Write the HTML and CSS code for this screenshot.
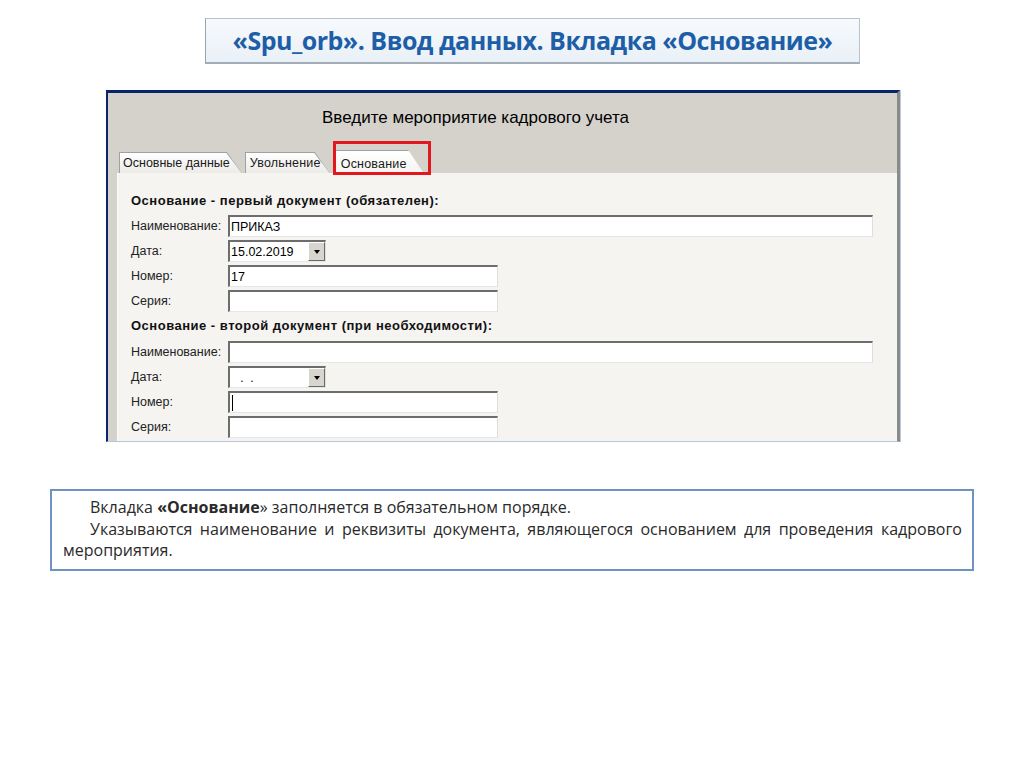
FILE: index.html
```html
<!DOCTYPE html>
<html lang="ru">
<head>
<meta charset="utf-8">
<title>Spu_orb</title>
<link rel="stylesheet" href="styles.css">
</head>
<body>
<div class="slide">
  <div class="title-box"><h1>«Spu_orb». Ввод данных. Вкладка «Основание»</h1></div>

  <div class="window">
    <div class="win-title">Введите мероприятие кадрового учета</div>
    <div class="tabs">
      <div class="tab first"><span>Основные данные</span></div>
      <div class="tab second"><span>Увольнение</span></div>
      <div class="tab active"><span>Основание</span><div class="highlight"></div></div>
    </div>
    <div class="panel">
      <div class="section">Основание - первый документ (обязателен):</div>
      <div class="row"><div class="label">Наименование:</div><div class="field wide">ПРИКАЗ</div></div>
      <div class="row"><div class="label">Дата:</div><div class="field date"><span class="val">15.02.2019</span><span class="btn"><i></i></span></div></div>
      <div class="row"><div class="label">Номер:</div><div class="field mid">17</div></div>
      <div class="row"><div class="label">Серия:</div><div class="field mid"></div></div>

      <div class="section later">Основание - второй документ (при необходимости):</div>
      <div class="row"><div class="label">Наименование:</div><div class="field wide"></div></div>
      <div class="row"><div class="label">Дата:</div><div class="field date"><span class="val dots">&nbsp;.&nbsp;&nbsp;.</span><span class="btn"><i></i></span></div></div>
      <div class="row"><div class="label">Номер:</div><div class="field mid"><span class="caret"></span></div></div>
      <div class="row"><div class="label">Серия:</div><div class="field mid"></div></div>
    </div>
  </div>

  <div class="note">
    <p>Вкладка <b>«Основание</b>» заполняется в обязательном порядке.</p>
    <p>Указываются наименование и реквизиты документа, являющегося основанием для проведения кадрового мероприятия.</p>
  </div>
</div>
</body>
</html>
```

FILE: styles.css
```css
html, body {
  margin: 0;
  padding: 0;
  background: #ffffff;
}

.slide {
  width: 1024px;
  height: 767px;
  display: flex;
  flex-direction: column;
  align-items: flex-start;
  background: #ffffff;
  overflow: hidden;
}

/* Title */
.title-box {
  margin: 18px 0 0 205px;
  width: 655px;
  height: 46px;
  box-sizing: border-box;
  background: linear-gradient(#f7fafd, #e9f0f7);
  border: 1px solid #b9c3cc;
  border-left-color: #9aa4ae;
  border-bottom: 2px solid #a3adb7;
  display: flex;
  align-items: center;
  justify-content: center;
}

.title-box h1 {
  margin: 0;
  font-family: "Open Sans", "Noto Sans", sans-serif;
  font-weight: 700;
  font-size: 25px;
  letter-spacing: -0.5px;
  color: #1d5ea6;
  line-height: 1;
}

/* Window */
.window {
  margin: 26px 0 0 106px;
  width: 794px;
  height: 352px;
  box-sizing: border-box;
  background: #d5d2cc;
  border-top: 3px solid #0a246a;
  border-left: 2px solid #0a246a;
  border-right: 3px solid #8a8a8a;
  border-bottom: 1px solid #b6c6da;
  box-shadow: 1px 0 0 #b8cbe2;
  display: flex;
  flex-direction: column;
  font-family: "Liberation Sans", Arial, sans-serif;
  color: #000;
}

.win-title {
  height: 56px;
  box-sizing: border-box;
  padding: 16px 0 0 214px;
  font-size: 17px;
  line-height: 18px;
}

.tabs {
  height: 24px;
  display: flex;
  align-items: flex-end;
  gap: 3px;
  padding-left: 11px;
}

.tab {
  position: relative;
  height: 21px;
  box-sizing: border-box;
  padding: 1px 0 0 1px;
  background: #9aa3a6;
  clip-path: polygon(0 0, calc(100% - 15px) 0, 100% 100%, 0 100%);
}

.tab span {
  display: block;
  height: 20px;
  box-sizing: border-box;
  padding: 3px 12px 0 3px;
  background: linear-gradient(#ffffff, #ecebe6);
  clip-path: polygon(0 0, calc(100% - 15.5px) 0, 100% 100%, 0 100%);
  font-size: 12.5px;
  line-height: 15px;
  color: #1a1a1a;
  white-space: nowrap;
}

.tab.second span {
  padding: 3px 9px 0 4px;
  letter-spacing: 0.2px;
}

.tab.active {
  height: 23px;
  margin-left: 2px;
  clip-path: none;
  background: transparent;
  padding: 0;
}

.tab.active span {
  height: 23px;
  padding: 6px 17px 0 5px;
  background: linear-gradient(#ffffff, #f5f4f1);
  border-left: 1px solid #9aa3a6;
  border-top: 1px solid #9aa3a6;
  letter-spacing: 0.2px;
}

.highlight {
  position: absolute;
  left: -2px;
  top: -9px;
  width: 98px;
  height: 34px;
  box-sizing: border-box;
  border: 3px solid #e2181e;
}

/* Panel */
.panel {
  flex: 1;
  margin: 0 0 0 9px;
  background: #f5f4f1;
  border-left: 1px solid #fbfbfa;
  padding: 19px 0 0 13px;
}

.section {
  font-weight: 700;
  font-size: 13px;
  letter-spacing: 0.5px;
  line-height: 17px;
  height: 17px;
  margin-bottom: 6px;
  color: #111;
}

.section.later {
  margin-top: 5px;
  margin-bottom: 7px;
}

.row {
  display: flex;
  align-items: center;
  height: 22px;
  margin-bottom: 3px;
}

.label {
  width: 97px;
  flex: none;
  font-size: 12.5px;
  color: #222;
}

.field {
  height: 22px;
  box-sizing: border-box;
  background: #ffffff;
  border-top: 2px solid #6d6d6d;
  border-left: 2px solid #6d6d6d;
  border-right: 1px solid #dedede;
  border-bottom: 1px solid #e6e6e6;
  padding-left: 1px;
  font-size: 12.5px;
  line-height: 18px;
  color: #000;
  display: flex;
  align-items: center;
}

.field.wide { width: 645px; }
.field.mid { width: 270px; }

.field.date {
  width: 98px;
  padding-right: 0;
}

.field.date .val {
  flex: 1;
}

.field.date .dots {
  padding-left: 6px;
  font-size: 12px;
}

.btn {
  width: 17px;
  height: 19px;
  box-sizing: border-box;
  background: #d8d5cf;
  border-top: 1px solid #ffffff;
  border-left: 1px solid #ffffff;
  border-right: 1px solid #6a6a6a;
  border-bottom: 1px solid #6a6a6a;
  display: flex;
  align-items: center;
  justify-content: center;
}

.btn i {
  display: block;
  width: 0;
  height: 0;
  border-left: 3.5px solid transparent;
  border-right: 3.5px solid transparent;
  border-top: 4px solid #000;
}

.caret {
  display: block;
  width: 1px;
  height: 16px;
  margin-left: 1px;
  background: #000;
}

/* Note */
.note {
  margin: 47px 0 0 50px;
  width: 924px;
  height: 82px;
  box-sizing: border-box;
  border: 2px solid #6e92c3;
  background: #ffffff;
  padding: 6px 10px 0 11px;
  font-family: "Open Sans", "Noto Sans", sans-serif;
  font-size: 16px;
  line-height: 21.5px;
  color: #2a2a2a;
}

.note p {
  margin: 0;
  text-indent: 27px;
  text-align: justify;
}

.note b {
  font-weight: 700;
}
```
